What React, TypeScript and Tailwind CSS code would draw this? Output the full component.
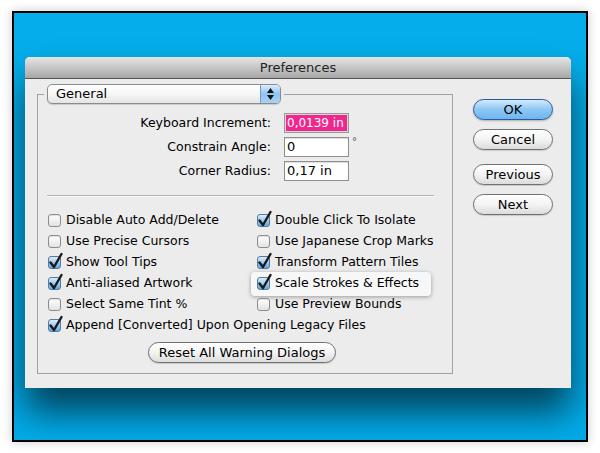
import React from 'react';

const font = { fontFamily: '"DejaVu Sans", "Liberation Sans", sans-serif' };

function CheckBox({ checked }: { checked?: boolean }) {
  return (
    <span
      className={
        'relative inline-block w-[13px] h-[13px] shrink-0 rounded-[3px] border ' +
        (checked
          ? 'border-[#55799f] bg-gradient-to-b from-[#dcecfb] via-[#9fcbf2] to-[#5fa9ea]'
          : 'border-[#8d8d8d] bg-gradient-to-b from-[#ffffff] to-[#e3e3e3] shadow-[inset_0_1px_1px_rgba(0,0,0,0.12)]')
      }
    >
      {checked && (
        <svg className="absolute -top-[5px] -left-[1px]" width="16" height="18" viewBox="0 0 16 18">
          <path d="M2.5 10.5 L6 15 L13.5 2" fill="none" stroke="#1a1a1a" strokeWidth="2.4" strokeLinecap="round" strokeLinejoin="round" />
        </svg>
      )}
    </span>
  );
}

function Option({ label, checked }: { label: string; checked?: boolean }) {
  return (
    <div className="flex items-center h-[21px] gap-[5px]">
      <CheckBox checked={checked} />
      <span className="whitespace-nowrap">{label}</span>
    </div>
  );
}

function AquaButton({ children, primary, className = '' }: { children: React.ReactNode; primary?: boolean; className?: string }) {
  return (
    <div
      className={
        'flex items-center justify-center h-[21px] rounded-full border text-[13px] text-black ' +
        (primary
          ? 'border-[#2c58a0] bg-gradient-to-b from-[#d3eafc] via-[#8ec6f3] to-[#6cb6f0] shadow-[0_1px_2px_rgba(0,0,0,0.25)]'
          : 'border-[#707070] bg-gradient-to-b from-[#ffffff] via-[#f3f3f3] to-[#dcdcdc] shadow-[0_1px_1px_rgba(0,0,0,0.15)]') +
        ' ' +
        className
      }
    >
      {children}
    </div>
  );
}

function Field({ label, value, pink, unit }: { label: string; value: string; pink?: boolean; unit?: string }) {
  return (
    <div className="flex items-center h-[20px]">
      <div className="w-[234px] text-right pr-[1px]">{label}</div>
      <div className="ml-[12px] flex items-start">
        <div
          className={
            'w-[65px] h-[20px] border flex items-center pl-[2px] whitespace-nowrap overflow-hidden ' +
            (pink
              ? 'border-[#9a9a9a] bg-[#f0288d] text-white shadow-[inset_0_0_0_1px_#d8d8d8] text-[12px]'
              : 'border-[#8f8f8f] bg-white text-black shadow-[inset_0_1px_1px_rgba(0,0,0,0.15)] text-[13px]')
          }
        >
          {value}
        </div>
        {unit && <span className="ml-[3px] -mt-[3px] text-[10px] text-[#555]">{unit}</span>}
      </div>
    </div>
  );
}

export default function App() {
  return (
    <div className="w-[600px] h-[453px] bg-white pl-[12px] pt-[11px]" style={font}>
      <div className="w-[576px] h-[431px] border-2 border-black bg-gradient-to-b from-[#05aeea] to-[#02acea] shadow-[0_0_10px_rgba(0,0,0,0.2)] overflow-hidden">
        <div className="ml-[11px] mt-[44px] w-[546px] h-[331px] bg-[#ececec] rounded-t-[5px] shadow-[0_24px_36px_rgba(0,0,0,0.62)] flex flex-col text-[12.5px] text-black">
          {/* Title bar */}
          <div className="h-[22px] shrink-0 rounded-t-[5px] flex items-center justify-center bg-gradient-to-b from-[#e6e6e6] to-[#a7a7a7] border-b border-[#555] text-[13px] text-[#222]">
            Preferences
          </div>

          <div className="flex pl-[12px] pt-[15px]">
            {/* Group box */}
            <div className="w-[416px] h-[280px] border border-[#a2a2a2] flex flex-col">
              <div className="-mt-[11px] ml-[6px] w-fit px-[3px] bg-[#ececec]">
                <div className="relative w-[234px] h-[20px] rounded-[5px] border border-[#8b8b8b] bg-gradient-to-b from-[#ffffff] via-[#f6f6f6] to-[#e4e4e4] flex items-center pl-[8px] text-[13px] shadow-[0_1px_1px_rgba(0,0,0,0.15)] overflow-hidden">
                  General
                  <div className="absolute right-0 top-0 bottom-0 w-[20px] border-l border-[#7a99c4] bg-gradient-to-b from-[#d9ecfc] via-[#8fc4f1] to-[#a9d3f6] flex flex-col items-center justify-center gap-[2px]">
                    <svg width="7" height="5" viewBox="0 0 7 5"><path d="M3.5 0 L7 5 L0 5 Z" fill="#111" /></svg>
                    <svg width="7" height="5" viewBox="0 0 7 5"><path d="M0 0 L7 0 L3.5 5 Z" fill="#111" /></svg>
                  </div>
                </div>
              </div>

              <div className="mt-[9px] flex flex-col gap-[4px]">
                <Field label="Keyboard Increment:" value="0,0139 in" pink />
                <Field label="Constrain Angle:" value="0" unit="°" />
                <Field label="Corner Radius:" value="0,17 in" />
              </div>

              <div className="mt-[14px] ml-[9px] w-[387px] h-[1px] bg-[#b4b4b4] shadow-[0_1px_0_#fafafa]" />

              <div className="mt-[14px] ml-[10px] grid grid-cols-[209px_1fr]">
                <Option label="Disable Auto Add/Delete" />
                <Option label="Double Click To Isolate" checked />
                <Option label="Use Precise Cursors" />
                <Option label="Use Japanese Crop Marks" />
                <Option label="Show Tool Tips" checked />
                <Option label="Transform Pattern Tiles" checked />
                <Option label="Anti-aliased Artwork" checked />
                <div className="relative">
                  <div className="absolute -left-[6px] top-[-1px] w-[180px] h-[24px] rounded-[4px] bg-[#f7f7f7] shadow-[0_1px_4px_rgba(0,0,0,0.35)]" />
                  <div className="relative">
                    <Option label="Scale Strokes & Effects" checked />
                  </div>
                </div>
                <Option label="Select Same Tint %" />
                <Option label="Use Preview Bounds" />
                <div className="col-span-2">
                  <Option label="Append [Converted] Upon Opening Legacy Files" checked />
                </div>
              </div>

              <div className="mt-[6px] flex justify-center pr-[6px]">
                <AquaButton className="w-[188px] text-[12.5px]">Reset All Warning Dialogs</AquaButton>
              </div>
            </div>

            {/* Right buttons */}
            <div className="ml-[20px] mt-[5px] flex flex-col w-[80px]">
              <AquaButton primary>OK</AquaButton>
              <AquaButton className="mt-[9px]">Cancel</AquaButton>
              <AquaButton className="mt-[14px]">Previous</AquaButton>
              <AquaButton className="mt-[9px]">Next</AquaButton>
            </div>
          </div>
        </div>
      </div>
    </div>
  );
}
